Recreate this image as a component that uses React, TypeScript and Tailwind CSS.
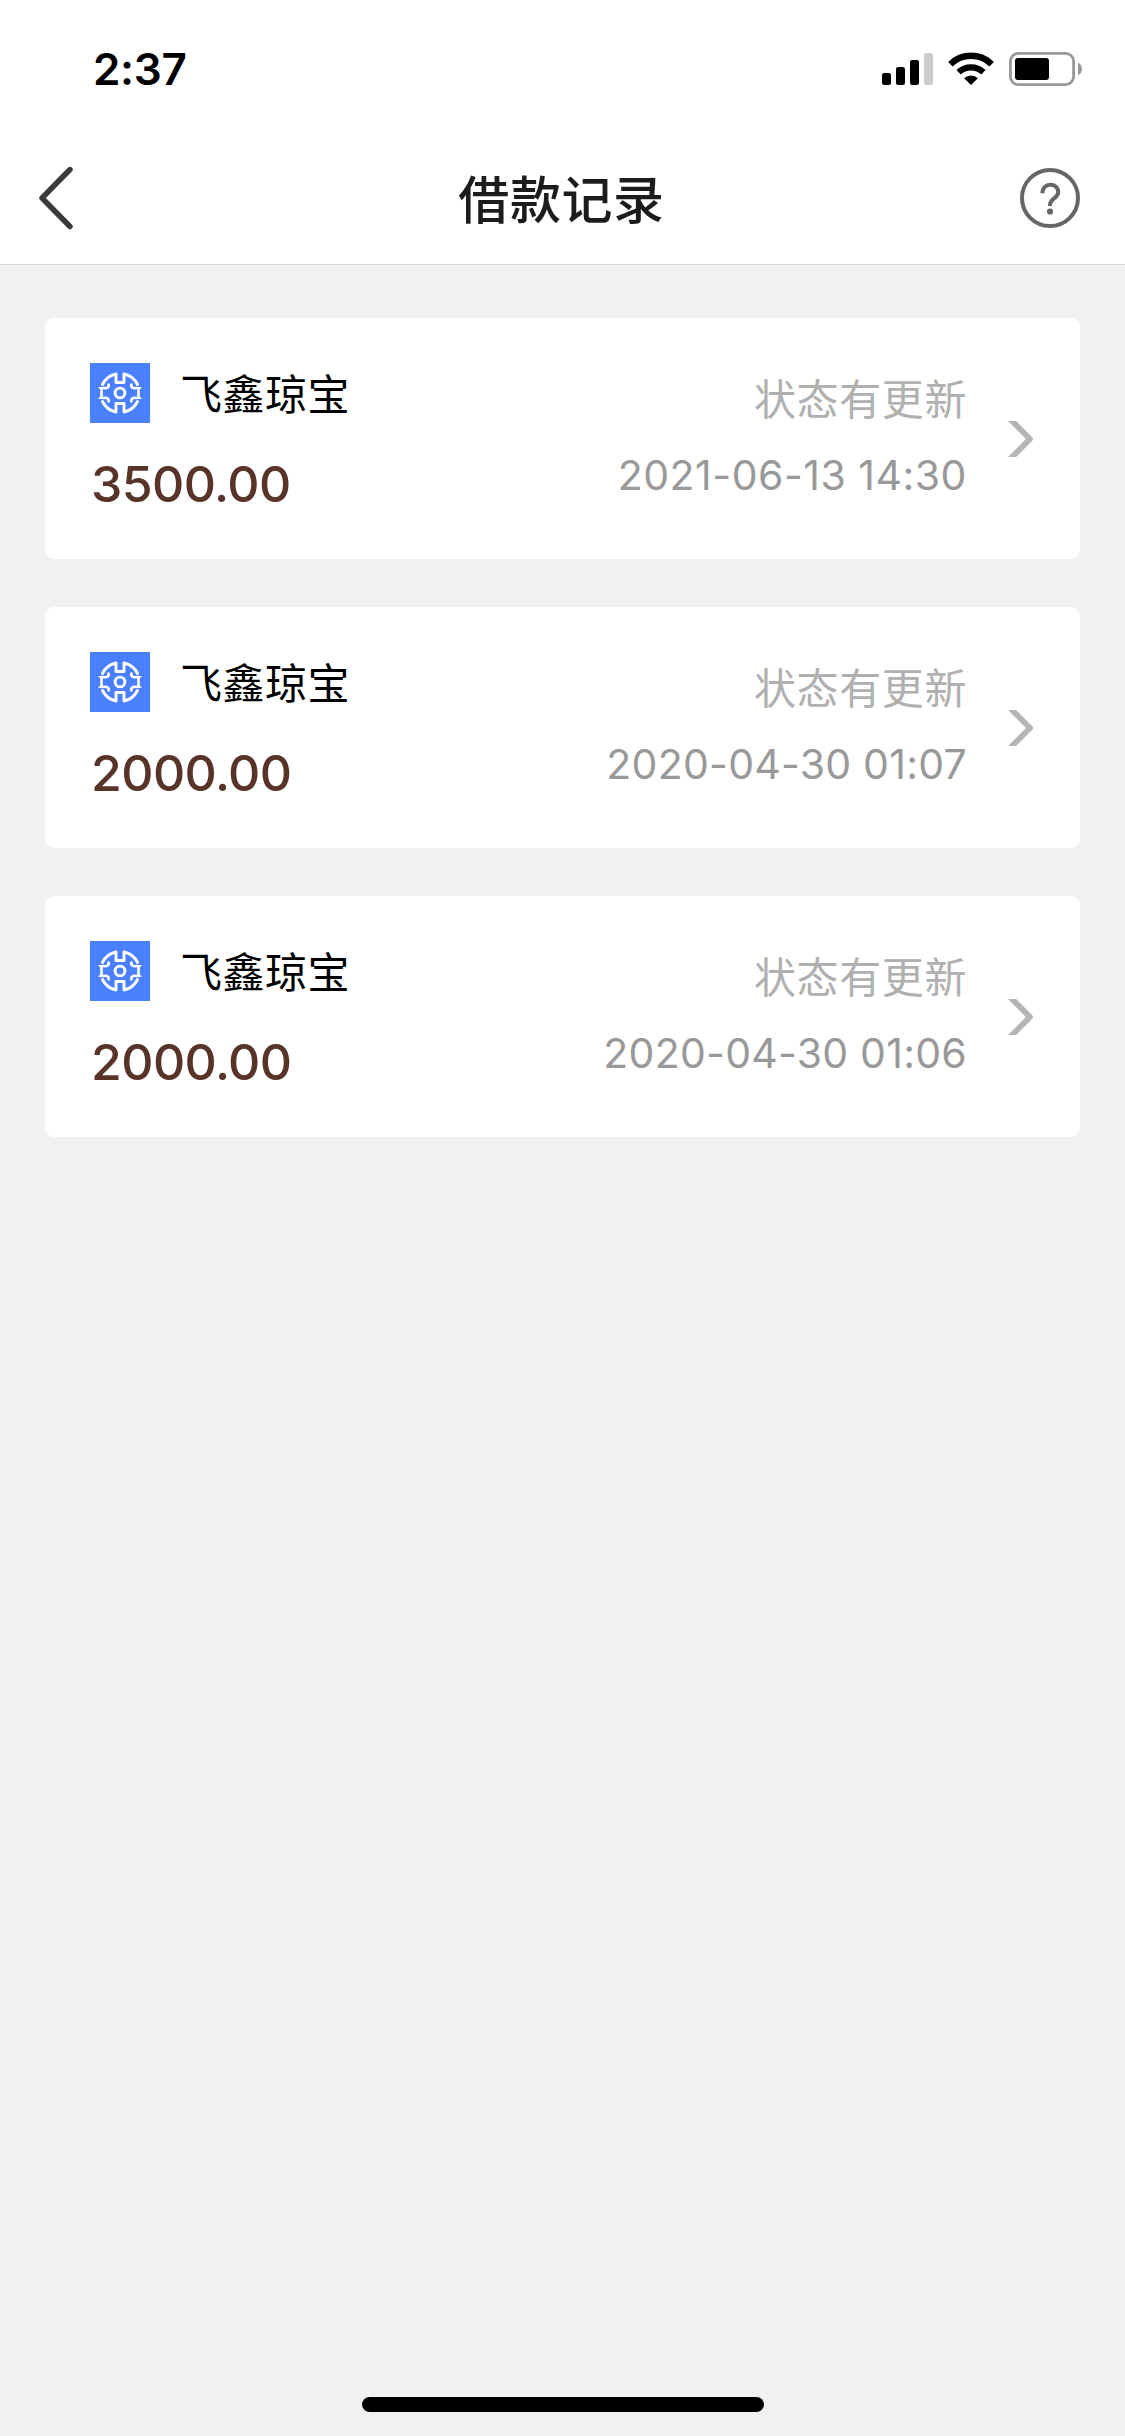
interface LoanRecord { id: number; name: string; amount: string; status: string; time: string; timeTracking: string }

const records: LoanRecord[] = [
  { id: 1, name: '飞鑫琼宝', amount: '3500.00', status: '状态有更新', time: '2021-06-13 14:30', timeTracking: 'tracking-[0.5px]' },
  { id: 2, name: '飞鑫琼宝', amount: '2000.00', status: '状态有更新', time: '2020-04-30 01:07', timeTracking: 'tracking-[0.25px]' },
  { id: 3, name: '飞鑫琼宝', amount: '2000.00', status: '状态有更新', time: '2020-04-30 01:06', timeTracking: 'tracking-[0.25px]' },
]

function StatusBar() {
  return (
    <div className="flex h-[132px] items-start justify-between pl-[93px] pr-[43px] pt-[52px]">
      <span className="mt-px font-['Inter',sans-serif] text-[44px] font-semibold leading-[33px] tracking-[-0.3px] text-black">2:37</span>
      <div className="flex h-[34px] items-start">
        <svg className="mr-[15px]" width="51" height="34" viewBox="0 0 51 34">
          <rect x="0" y="21" width="9" height="12" rx="2.2" />
          <rect x="14" y="15" width="9" height="18" rx="2.2" />
          <rect x="28" y="8" width="9" height="25" rx="2.2" />
          <rect x="42" y="1" width="9" height="32" rx="2.2" fill="#cccccc" />
        </svg>
        <svg className="mr-[15px]" width="46" height="34" viewBox="0 0 46 34">
          <path d="M2.4 12.2a29.5 29.5 0 0 1 41.2 0" fill="none" stroke="#000" strokeWidth="6.4" />
          <path d="M10.6 20.3a18 18 0 0 1 24.8 0" fill="none" stroke="#000" strokeWidth="6.2" />
          <path d="M23 33l-6.9-6.8a10 10 0 0 1 13.8 0z" />
        </svg>
        <svg width="73" height="34" viewBox="0 0 73 34">
          <rect x="1.4" y="1.4" width="63.2" height="31.2" rx="8" fill="none" stroke="#999999" strokeWidth="2.8" />
          <rect x="6" y="6" width="34" height="22" rx="3" />
          <path d="M69 10.8c5.3 2.2 5.3 10.2 0 12.4z" fill="#999999" />
        </svg>
      </div>
    </div>
  )
}

function NavBar() {
  return (
    <div className="flex h-[133px] items-center justify-between border-b border-[#d9d9d9] pl-[39px] pr-[45px]">
      <svg width="64" height="64" viewBox="0 0 64 64" fill="none">
        <path d="M31 3.5L3 32L31 60.5" stroke="#3a3a3a" strokeWidth="5.4" strokeLinecap="round" strokeLinejoin="round" />
      </svg>
      <h1 className="mb-[3px] font-['Noto_Sans_CJK_SC',sans-serif] text-[51px] font-medium leading-[60px] tracking-[0.6px] text-[#1c1c1e]">借款记录</h1>
      <svg width="60" height="60" viewBox="0 0 60 60" fill="none">
        <circle cx="30" cy="30" r="28" stroke="#666666" strokeWidth="4" />
        <path d="M22.4 25.2C22.4 14 38.2 14 38.2 24.2C38.2 30.5 29.8 30 29.8 38" stroke="#666666" strokeWidth="4" />
        <circle cx="30" cy="43.5" r="3.1" fill="#666666" />
      </svg>
    </div>
  )
}

function Logo() {
  return (
    <svg width="60" height="60" viewBox="0 0 60 60" fill="none" className="bg-[#4a80fd]">
      <g stroke="#fff" strokeWidth="2.9" strokeLinecap="round" strokeLinejoin="round">
        <circle cx="30" cy="30" r="4.9" />
        <path d="M12.5 21.500A19.300 19.300 0 0 1 26 11V19.500H34V11A19.300 19.300 0 0 1 47.500 21.500" />
        <path d="M12.5 38.500A19.300 19.300 0 0 0 26 49V40.500H34V49A19.300 19.300 0 0 0 47.500 38.500" />
        <path d="M13.500 25C17 26 19.500 24 18.500 21.500M13.500 35C17 34 19.500 36 18.500 38.500M11.500 25V35" strokeWidth="2.600" />
        <path d="M46.500 25C43 26 40.500 24 41.500 21.500M46.500 35C43 34 40.500 36 41.500 38.500M48.500 25V35" strokeWidth="2.600" />
        <path d="M9.400 24.800H12M9.400 35.200H12M48 24.800H50.600M48 35.200H50.600" strokeWidth="1.800" />
      </g>
    </svg>
  )
}

function RecordCard({ record }: { record: LoanRecord }) {
  return (
    <div className="flex h-[241px] justify-between rounded-[9px] bg-white pl-[45px] pr-[46px] pt-[45px]">
      <div>
        <div className="flex h-[60px] items-center">
          <Logo />
          <span className="mb-[3px] ml-[30px] font-['Noto_Sans_CJK_SC',sans-serif] text-[42px] leading-[60px] tracking-[0.5px] text-black">{record.name}</span>
        </div>
        <p className="ml-px mt-[31px] font-['Inter',sans-serif] text-[50px] font-medium leading-[60px] tracking-[-0.6px] text-[#573328]">{record.amount}</p>
      </div>
      <div className="flex">
        <div className="flex flex-col items-end">
          <span className="mt-[4px] font-['Noto_Sans_CJK_SC',sans-serif] text-[42px] leading-[60px] tracking-[0.6px] text-[#b0b0b0]">{record.status}</span>
          <span className={`mt-[18px] font-['Inter',sans-serif] text-[41px] leading-[60px] text-[#999999] ${record.timeTracking}`}>{record.time}</span>
        </div>
        <svg className="ml-[41px] mt-[58px]" width="26" height="36" viewBox="0 0 26 36" fill="none">
          <path d="M1.5 -2.5L22 18L1.5 38.5" stroke="#b5b5b5" strokeWidth="5.8" strokeLinejoin="round" />
        </svg>
      </div>
    </div>
  )
}

export default function App() {
  return (
    <div className="flex h-[2436px] w-[1125px] flex-col bg-[#f1f1f1]">
      <header className="bg-white">
        <StatusBar />
        <NavBar />
      </header>
      <main className="flex flex-1 flex-col gap-12 px-[45px] pt-[53px]">
        {records.map(record => <RecordCard key={record.id} record={record} />)}
      </main>
      <div className="mb-[24px] h-[15px] w-[402px] self-center rounded-full bg-black" />
    </div>
  )
}
